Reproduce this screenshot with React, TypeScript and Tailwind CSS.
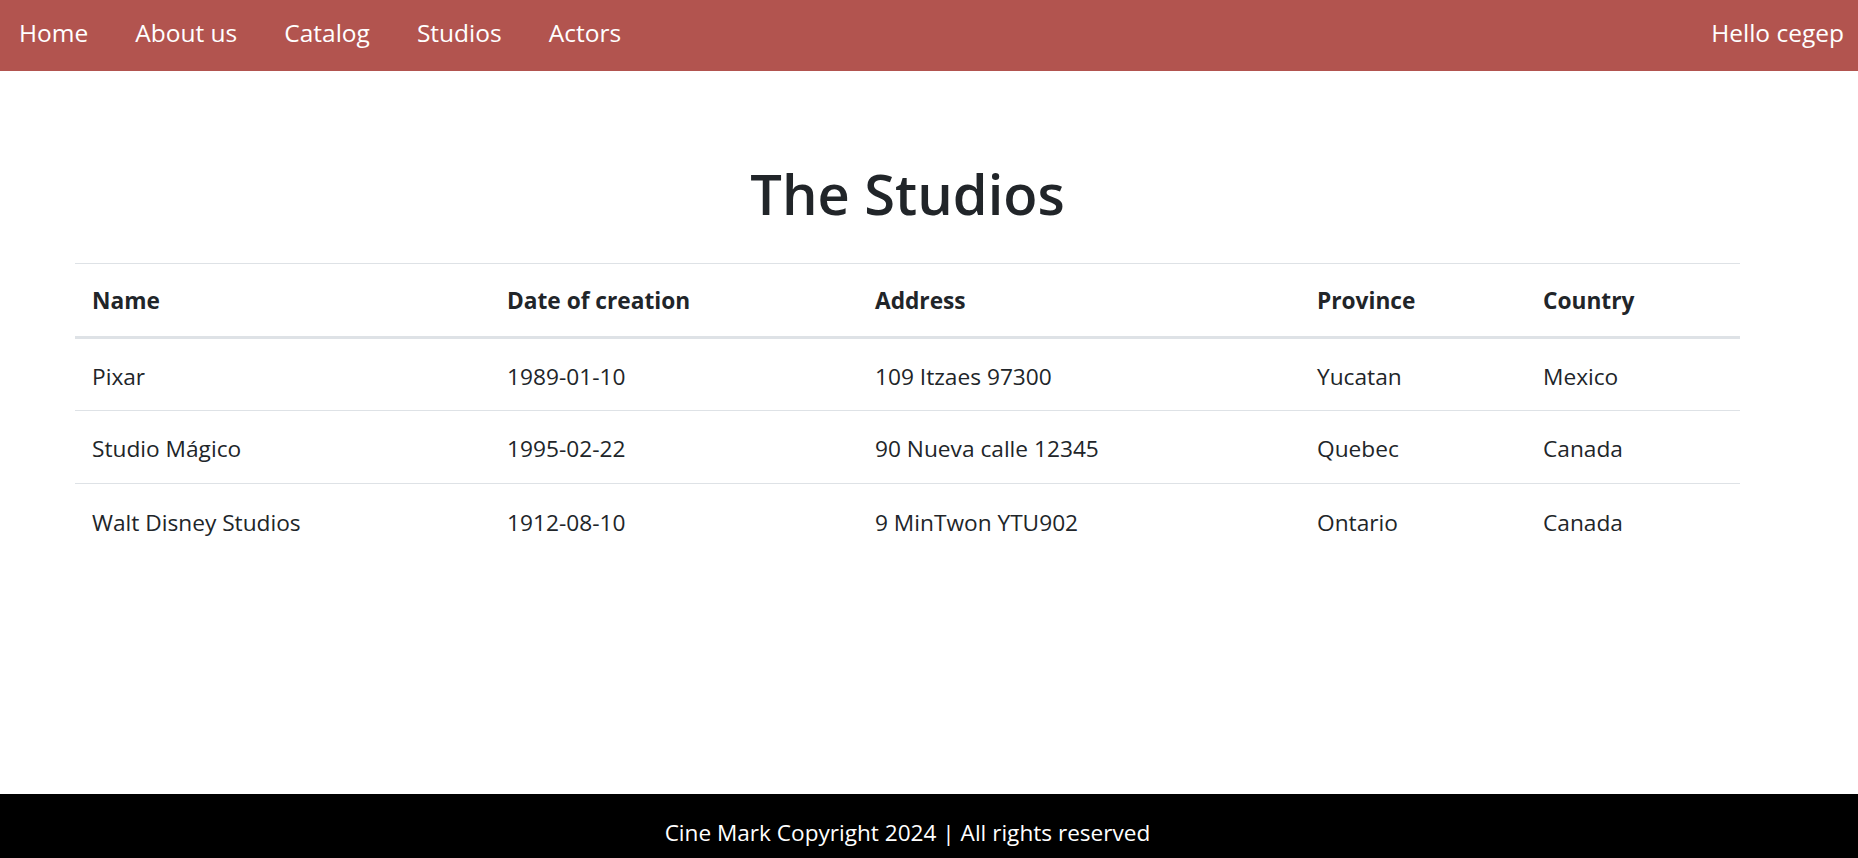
import React from "react";

const rows = [
  ["Pixar", "1989-01-10", "109 Itzaes 97300", "Yucatan", "Mexico"],
  ["Studio Mágico", "1995-02-22", "90 Nueva calle 12345", "Quebec", "Canada"],
  ["Walt Disney Studios", "1912-08-10", "9 MinTwon YTU902", "Ontario", "Canada"],
];

const headers = ["Name", "Date of creation", "Address", "Province", "Country"];
const widths = ["w-[415px]", "w-[368px]", "w-[442px]", "w-[226px]", "w-[214px]"];

export default function App() {
  return (
    <div
      className="min-h-screen flex flex-col bg-white text-[#212529]"
      style={{ fontFamily: '"Open Sans", "Noto Sans", sans-serif' }}
    >
      <nav className="h-[71px] shrink-0 bg-[#b2544f] flex items-center justify-between pl-[19px] pr-[14px] pb-[5px] text-white text-[24.5px]">
        <div className="flex items-center gap-[47px]">
          <a>Home</a>
          <a>About us</a>
          <a>Catalog</a>
          <a>Studios</a>
          <a>Actors</a>
        </div>
        <div>Hello cegep</div>
      </nav>

      <main className="flex-1 pl-[75px] pr-[118px] pt-[87px]">
        <h1 className="text-center text-[56px] leading-[70px] font-semibold mb-[35px]">The Studios</h1>
        <table className="w-full border-collapse text-[22.7px] table-fixed">
          <thead>
            <tr className="border-t border-[#dee2e6] border-b-[3px] border-b-[#dee2e6]">
              {headers.map((h, i) => (
                <th key={h} className={`${widths[i]} h-[74px] text-left font-bold pl-[17px] pt-[3px] align-middle`}>
                  {h}
                </th>
              ))}
            </tr>
          </thead>
          <tbody>
            {rows.map((r, ri) => (
              <tr key={ri} className={ri < rows.length - 1 ? "border-b border-[#dee2e6]" : ""}>
                {r.map((c, ci) => (
                  <td key={ci} className="h-[73px] pl-[17px] pt-[5px] align-middle">
                    {c}
                  </td>
                ))}
              </tr>
            ))}
          </tbody>
        </table>
      </main>

      <footer className="h-[64px] shrink-0 bg-black text-white text-[22.6px] flex items-center justify-center pl-[75px] pr-[118px] pt-[14px]">
        Cine Mark Copyright 2024 | All rights reserved
      </footer>
    </div>
  );
}
